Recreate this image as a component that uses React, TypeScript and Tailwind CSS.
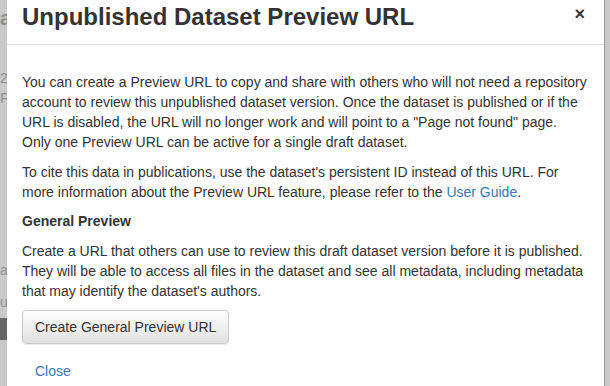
export default function App() {
  return (
    <div
      className="relative w-[610px] h-[386px] overflow-hidden bg-[#c9c9c9] text-[#333]"
      style={{ fontFamily: '"Liberation Sans", Arial, sans-serif' }}
    >
      {/* faint page behind the backdrop */}
      <div className="absolute left-0 top-0 w-[7px] h-full text-[#8f8f8f] text-[14px] leading-5">
        <div className="mt-[8px] text-[20px] font-bold">a</div>
        <div className="mt-[40px]">2</div>
        <div>F</div>
        <div className="mt-[152px]">a</div>
        <div className="mt-[12px]">u</div>
        <div className="mt-[6px] h-[22px] bg-[#666]" />
      </div>

      <div className="absolute left-[7px] top-0 w-[598px] h-full bg-white border-r border-[#9a9a9a]">
        {/* header */}
        <div className="relative h-[45px] border-b border-[#e5e5e5] px-[15px]">
          <h4 className="pt-[2px] text-[24px] leading-[30px] font-bold text-[#333]">
            Unpublished Dataset Preview URL
          </h4>
          <button className="absolute right-[19px] top-[5px] text-[18px] leading-[18px] font-bold text-[#000] opacity-80">
            ×
          </button>
        </div>

        {/* body */}
        <div className="px-[15px] pt-[27px] text-[14px] leading-5">
          <p className="mb-[10px]">
            You can create a Preview URL to copy and share with others who will not need a repository
            account to review this unpublished dataset version. Once the dataset is published or if the
            URL is disabled, the URL will no longer work and will point to a "Page not found" page.
            Only one Preview URL can be active for a single draft dataset.
          </p>
          <p className="mb-[9px]">
            To cite this data in publications, use the dataset's persistent ID instead of this URL. For
            more information about the Preview URL feature, please refer to the{" "}
            <a className="text-[#337ab7]">User Guide</a>.
          </p>
          <p className="mb-[10px] font-bold">General Preview</p>
          <p className="mb-[9px]">
            Create a URL that others can use to review this draft dataset version before it is published.
            They will be able to access all files in the dataset and see all metadata, including metadata
            that may identify the dataset's authors.
          </p>
          <button className="h-[34px] px-[12px] rounded-[4px] border border-[#ccc] bg-gradient-to-b from-white to-[#e0e0e0] text-[14px] text-[#333] shadow-[0_1px_1px_rgba(0,0,0,0.075)]">
            Create General Preview URL
          </button>
        </div>

        {/* footer */}
        <div className="px-[28px] pt-[17px] text-[14px] leading-5">
          <a className="text-[#337ab7]">Close</a>
        </div>
      </div>
    </div>
  );
}
